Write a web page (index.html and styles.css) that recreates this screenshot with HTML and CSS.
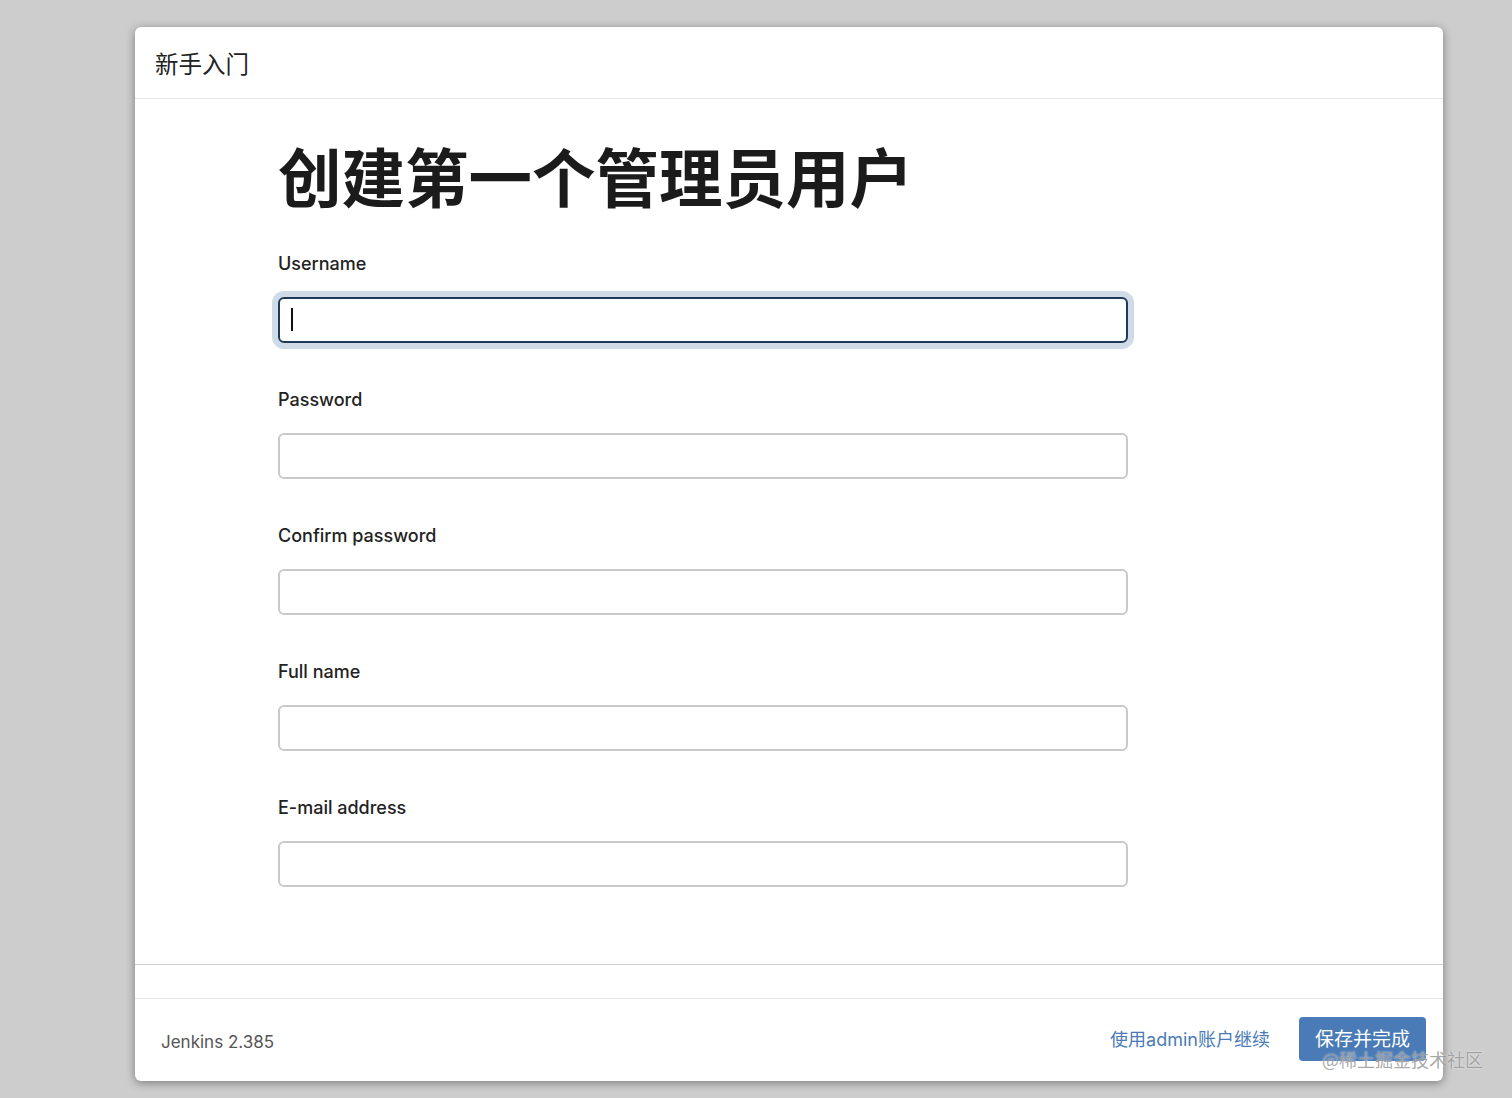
FILE: index.html
```html
<!DOCTYPE html>
<html lang="zh-CN">
<head>
  <meta charset="UTF-8" />
  <meta name="viewport" content="width=device-width, initial-scale=1.0" />
  <title>Jenkins - 新手入门</title>
  <link rel="stylesheet" href="styles.css">
</head>
<body>
  <div class="dialog">
    <div class="dialog-header">新手入门</div>

    <div class="dialog-body">
      <h1 class="title">创建第一个管理员用户</h1>

      <div class="field">
        <label class="label" for="username">Username</label>
        <div class="input-wrap">
          <input id="username" class="input focused" type="text" />
          <span class="caret"></span>
        </div>
      </div>

      <div class="field">
        <label class="label" for="password1">Password</label>
        <input id="password1" class="input" type="password" />
      </div>

      <div class="field">
        <label class="label" for="password2">Confirm password</label>
        <input id="password2" class="input" type="password" />
      </div>

      <div class="field">
        <label class="label" for="fullname">Full name</label>
        <input id="fullname" class="input" type="text" />
      </div>

      <div class="field">
        <label class="label" for="email">E-mail address</label>
        <input id="email" class="input" type="text" />
      </div>
    </div>

    <div class="dialog-footer">
      <span class="version">Jenkins 2.385</span>
      <div class="actions">
        <a class="skip" href="#">使用admin账户继续</a>
        <button class="save">保存并完成</button>
      </div>
    </div>
  </div>

  <div class="watermark">@稀土掘金技术社区</div>
</body>
</html>
```

FILE: styles.css
```css
body {
  margin: 0;
  background: #cdcdcd;
  font-family: Inter, "Noto Sans CJK SC", sans-serif;
  height: 100vh;
  overflow: hidden;
}
.dialog {
  margin: 27px 0 0 135px;
  width: 1308px;
  height: 1054px;
  background: #fff;
  border-radius: 6px;
  box-shadow: 0 2px 10px rgba(0, 0, 0, 0.4);
  display: flex;
  flex-direction: column;
}
.dialog-header {
  height: 71px;
  border-bottom: 1px solid #e6e6e6;
  display: flex;
  align-items: center;
  padding-left: 20px;
  font-family: "Noto Sans CJK SC", sans-serif;
  font-size: 23.5px;
  color: #222;
}
.dialog-body {
  flex: 1;
  padding: 0 0 0 143px;
  border-bottom: 1px solid #cfcfcf;
  margin-bottom: 33px;
}
.title {
  margin: 35px 0 39px;
  font-family: "Noto Sans CJK SC", sans-serif;
  font-size: 63.5px;
  font-weight: 700;
  line-height: 80px;
  color: #1b1b1b;
}
.field {
  margin-bottom: 46px;
}
.label {
  display: block;
  font-size: 18px;
  font-weight: 500;
  line-height: 22px;
  color: #222;
  margin-bottom: 22px;
}
.input-wrap {
  position: relative;
  width: 850px;
}
.input {
  display: block;
  box-sizing: border-box;
  width: 850px;
  height: 46px;
  border: 2px solid #c9c9c9;
  border-radius: 6px;
  outline: none;
  background: #fff;
  font-size: 18px;
  padding: 0 12px;
}
.input.focused {
  border-color: #1d3a5b;
  box-shadow: 0 0 0 6px #cfdbe6;
}
.caret {
  position: absolute;
  left: 13px;
  top: 11px;
  width: 1.5px;
  height: 23px;
  background: #111;
}
.dialog-footer {
  height: 82px;
  border-top: 1px solid #e8e8e8;
  display: flex;
  align-items: center;
  justify-content: space-between;
  padding: 0 17px 0 26px;
}
.version {
  font-size: 17px;
  color: #555;
  padding-top: 4px;
}
.actions {
  display: flex;
  align-items: center;
  gap: 29px;
}
.skip {
  font-size: 18px;
  color: #4a7bb6;
  text-decoration: none;
  padding-bottom: 4px;
}
.save {
  height: 44px;
  width: 127px;
  border: none;
  border-radius: 4px;
  background: #4a7bb7;
  color: #fff;
  font-family: "Noto Sans CJK SC", sans-serif;
  font-size: 19px;
  padding: 0 0 3px;
  margin-top: -2px;
}
.watermark {
  position: absolute;
  left: 1322px;
  top: 1046px;
  font-family: "Noto Sans CJK SC", sans-serif;
  font-size: 18px;
  color: rgba(140, 140, 140, 0.75);
  text-shadow: 0 0 2px rgba(255, 255, 255, 0.8);
}
```
